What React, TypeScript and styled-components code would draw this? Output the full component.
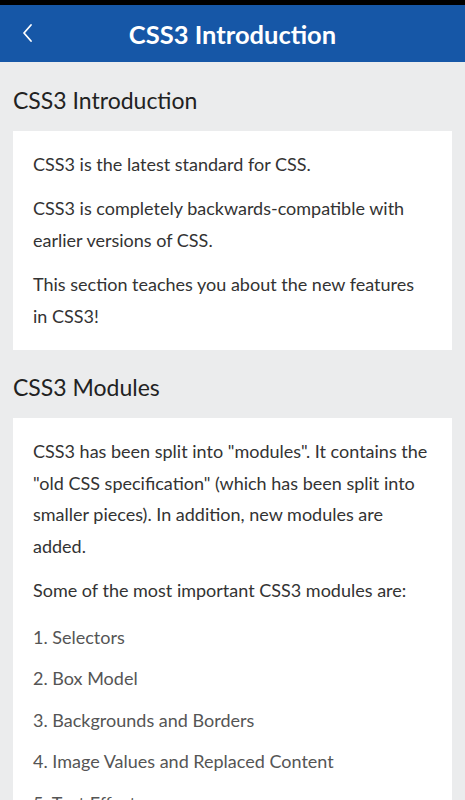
import styled, {createGlobalStyle} from "styled-components";

const GlobalStyle = createGlobalStyle`
  body {
    margin: 0;
    background: #ebeced;
    font-family: Lato, "Open Sans", sans-serif;
  }
`;

const Screen = styled.div`
  width: 465px;
  height: 800px;
  background: #ebeced;
  overflow: hidden;
`;

const StatusBar = styled.div`
  height: 5px;
  background: #000;
`;

const Header = styled.header`
  height: 57px;
  background: #1657a7;
  display: flex;
  align-items: center;
  justify-content: center;
  position: relative;
`;

const BackButton = styled.button`
  position: absolute;
  left: 14px;
  top: 14px;
  width: 28px;
  height: 28px;
  border: none;
  background: none;
  padding: 0;
  display: flex;
  align-items: center;
  justify-content: center;
`;

const Title = styled.h1`
  margin: 0;
  color: #fff;
  font-size: 25.5px;
  font-weight: 700;
`;

const Section = styled.section`
  padding: 22.5px 13px 0;
`;

const SectionTitle = styled.h2`
  margin: 0 0 16px;
  font-size: 23px;
  line-height: 30px;
  font-weight: 400;
  color: #222;
`;

const Card = styled.div`
  background: #fff;
  padding: 18px 20px 17.5px;
`;

const Para = styled.p`
  margin: 0 0 13px;
  font-size: 18px;
  line-height: 31.5px;
  color: #333;
  &:last-child {
    margin-bottom: 0;
  }
`;

const List = styled.ol`
  list-style: none;
  margin: 15px 0 0;
  padding: 0;
`;

const Item = styled.li`
  font-size: 18px;
  line-height: 31.5px;
  color: #555;
  margin-bottom: 10px;
`;

const modules = [
    "Selectors",
    "Box Model",
    "Backgrounds and Borders",
    "Image Values and Replaced Content",
    "Text Effects",
];

export default function App() {
    return (
        <Screen>
            <GlobalStyle/>
            <StatusBar/>
            <Header>
                <BackButton aria-label="Back">
                    <svg width="14" height="20" viewBox="0 0 14 20">
                        <path d="M10 2 L3 10 L10 18" fill="none" stroke="#fff" strokeWidth="1.8"
                              strokeLinecap="round" strokeLinejoin="round"/>
                    </svg>
                </BackButton>
                <Title>CSS3 Introduction</Title>
            </Header>
            <Section>
                <SectionTitle>CSS3 Introduction</SectionTitle>
                <Card>
                    <Para>CSS3 is the latest standard for CSS.</Para>
                    <Para>CSS3 is completely backwards-compatible with earlier versions of CSS.</Para>
                    <Para>This section teaches you about the new features in CSS3!</Para>
                </Card>
            </Section>
            <Section>
                <SectionTitle>CSS3 Modules</SectionTitle>
                <Card>
                    <Para>
                        CSS3 has been split into "modules". It contains the "old CSS specification" (which has
                        been split into smaller pieces). In addition, new modules are added.
                    </Para>
                    <Para>Some of the most important CSS3 modules are:</Para>
                    <List>
                        {modules.map((name, i) => (
                            <Item key={name}>{i + 1}. {name}</Item>
                        ))}
                    </List>
                </Card>
            </Section>
        </Screen>
    );
}
